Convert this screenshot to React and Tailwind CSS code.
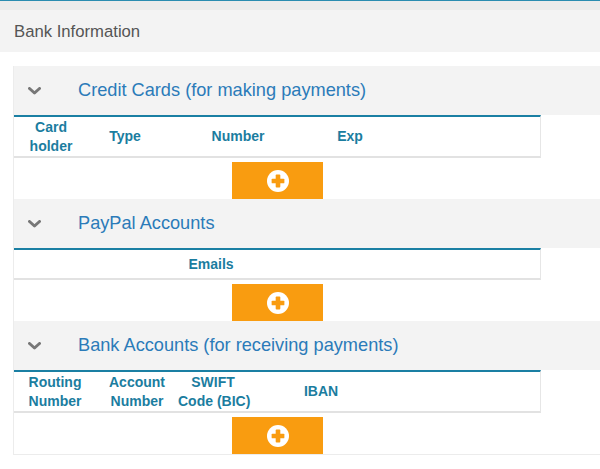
import { useState } from "react";

const sections = [
    {
        id: "cards",
        title: "Credit Cards (for making payments)",
        cols: "grid-cols-[74px_74px_152px_72px_1fr]",
        rowHeight: "h-[39px]",
        headers: [["Card", "holder"], ["Type"], ["Number"], ["Exp"], []],
    },
    {
        id: "paypal",
        title: "PayPal Accounts",
        cols: "grid-cols-[394px_1fr]",
        rowHeight: "h-[28px]",
        headers: [["Emails"], []],
    },
    {
        id: "bank",
        title: "Bank Accounts (for receiving payments)",
        cols: "grid-cols-[82px_82px_70px_146px_1fr]",
        rowHeight: "h-[39px]",
        headers: [["Routing", "Number"], ["Account", "Number"], ["SWIFT", "Code (BIC)"], ["IBAN"], []],
    },
];

function Chevron() {
    return (
        <svg width="13" height="8" viewBox="0 0 13 8" className="shrink-0">
            <polyline points="1.5,1.5 6.5,6 11.5,1.5" fill="none" stroke="#777" strokeWidth="3" strokeLinecap="round" strokeLinejoin="round" />
        </svg>
    );
}

function PlusCircle() {
    return (
        <svg width="22" height="22" viewBox="0 0 20 20">
            <circle cx="10" cy="10" r="10" fill="#fff" />
            <rect x="4.2" y="7.9" width="11.6" height="4.2" rx="0.8" fill="#f99c10" />
            <rect x="7.9" y="4.2" width="4.2" height="11.6" rx="0.8" fill="#f99c10" />
        </svg>
    );
}

function Section({ section }) {
    const [isOpen, setIsOpen] = useState(true);

    return (
        <div>
            <button
                type="button"
                onClick={() => setIsOpen(!isOpen)}
                className="w-full h-[49px] bg-[#f3f3f3] flex flex-row items-center text-left"
            >
                <span className="w-[64px] pl-[14px] flex items-center">
                    <Chevron />
                </span>
                <span className="text-[18.2px] text-[#2b7bb9]">{section.title}</span>
            </button>
            {isOpen && (
                <div className="w-[527px]">
                    <div className="border-t-2 border-t-[#1a7fa3] border-b-2 border-b-[#e2e2e2] border-r border-r-[#e6e6e6]">
                        <div className={`grid ${section.cols} ${section.rowHeight} items-center`}>
                            {section.headers.map((lines, i) => (
                                <div key={i} className="text-center text-[14px] leading-[19px] font-bold text-[#1b7d9f]">
                                    {lines.map((line, j) => (
                                        <div key={j} className="whitespace-nowrap">{line}</div>
                                    ))}
                                </div>
                            ))}
                        </div>
                    </div>
                    <div className="flex justify-center pt-[4px]">
                        <button type="button" className="w-[91px] h-[37px] bg-[#f99c10] flex items-center justify-center">
                            <PlusCircle />
                        </button>
                    </div>
                </div>
            )}
        </div>
    );
}

export default function App() {
    return (
        <div className="w-[600px] min-h-[469px] bg-white overflow-hidden font-['Liberation_Sans',Arial,sans-serif]">
            <div className="h-px bg-[#2a8cb0]" />
            <div className="h-[9px] bg-[#ebebeb]" />
            <div className="h-[42px] bg-[#f3f3f3] flex items-center px-[14px] pt-[2px] text-[16.7px] text-[#555]">
                Bank Information
            </div>
            <div className="pl-[13px] pt-[14px]">
                <div className="border-l border-b border-[#ececec]">
                    {sections.map(section => (
                        <Section key={section.id} section={section} />
                    ))}
                </div>
            </div>
        </div>
    );
}
